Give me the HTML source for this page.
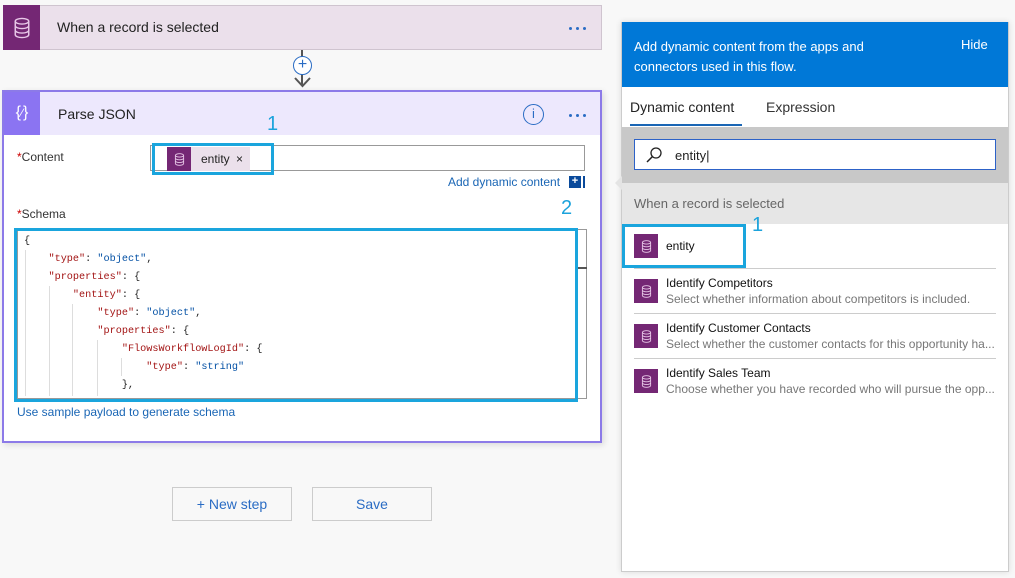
<!DOCTYPE html>
<html><head><style>
*{margin:0;padding:0;box-sizing:border-box}
body{width:1015px;height:578px;background:#f8f8f8;font-family:"Segoe UI","Liberation Sans",sans-serif;position:relative;overflow:hidden;color:#333}
.a{position:absolute}
.t{font-size:13px;white-space:nowrap}
.code{font-family:"Liberation Mono",monospace;font-size:10.2px;white-space:pre;color:#222}
.k{color:#a31515}.s{color:#0451a5}
.dots{display:flex;gap:4px}
.dots i{width:3px;height:3px;border-radius:50%;background:#2a6cc4;display:block}
.ic{background:#742774;display:flex;align-items:center;justify-content:center}
</style></head><body>
<svg width="0" height="0" style="position:absolute"><defs><symbol id="db" viewBox="0 0 16 20"><g fill="none" stroke="#e8c8e8" stroke-width="1.3"><ellipse cx="8" cy="4" rx="6" ry="2.5"/><path d="M2 4v12c0 1.4 2.7 2.5 6 2.5s6-1.1 6-2.5V4M2 8c0 1.4 2.7 2.5 6 2.5s6-1.1 6-2.5M2 12c0 1.4 2.7 2.5 6 2.5s6-1.1 6-2.5"/></g></symbol></defs></svg>

<!-- trigger card -->
<div class="a" style="left:3px;top:5px;width:599px;height:45px;background:#ebe0eb;border:1px solid #cfc4cf"></div>
<div class="a ic" style="left:3px;top:5px;width:37px;height:45px"><svg width="18" height="26"><use href="#db"/></svg></div>
<div class="a t" style="left:57px;top:19px;font-size:14px;color:#222">When a record is selected</div>
<div class="a dots" style="left:569px;top:27px"><i></i><i></i><i></i></div>

<!-- connector -->
<div class="a" style="left:301px;top:50px;width:2px;height:36px;background:#555"></div>
<div class="a" style="left:293px;top:56px;width:19px;height:19px;border-radius:50%;background:#fff;border:1px solid #2a6cc4;color:#2a6cc4;font-size:16px;line-height:16px;text-align:center">+</div>
<svg class="a" style="left:293px;top:76px" width="19" height="13"><path d="M2 2l7.5 8 7.5-8" fill="none" stroke="#555" stroke-width="2"/></svg>

<!-- Parse JSON card -->
<div class="a" style="left:2px;top:90px;width:600px;height:353px;background:#fff;border:2px solid #8c7ae8;box-shadow:2px 2px 6px rgba(0,0,0,.12)"></div>
<div class="a" style="left:4px;top:92px;width:596px;height:43px;background:#ede8fd"></div>
<div class="a" style="left:4px;top:92px;width:36px;height:43px;background:#8b74f2;color:#fff;font-size:16px;text-align:center;line-height:42px">{<span style="font-size:12px">⁄</span>}</div>
<div class="a t" style="left:58px;top:106px;font-size:14px;color:#222">Parse JSON</div>
<div class="a" style="left:523px;top:104px;width:21px;height:21px;border-radius:50%;border:1.5px solid #2a6cc4;color:#2a6cc4;font-size:13px;text-align:center;line-height:18px">i</div>
<div class="a dots" style="left:569px;top:114px"><i></i><i></i><i></i></div>
<div class="a" style="left:267px;top:113px;font-size:20px;color:#1ca3dc">1</div>

<div class="a t" style="left:17px;top:150px;font-size:12px"><span style="color:#c00">*</span>Content</div>
<div class="a" style="left:150px;top:145px;width:435px;height:26px;border:1px solid #999;background:#fff"></div>
<div class="a" style="left:167px;top:147px;width:83px;height:24px;background:#ebe0eb"></div>
<div class="a ic" style="left:167px;top:147px;width:24px;height:24px"><svg width="11" height="15"><use href="#db"/></svg></div>
<div class="a t" style="left:201px;top:152px;font-size:12px;color:#222">entity <span style="margin-left:3px">×</span></div>
<div class="a" style="left:152px;top:143px;width:122px;height:32px;border:3px solid #1aa5dd"></div>
<div class="a t" style="left:448px;top:175px;font-size:12px;color:#1a66b5">Add dynamic content</div>
<div class="a" style="left:569px;top:176px;width:12px;height:12px;background:#0a4a9b;color:#fff;font-size:11px;line-height:11px;text-align:center;font-weight:bold">+</div>
<div class="a" style="left:583px;top:176px;width:2px;height:12px;background:#0a4a9b"></div>

<div class="a t" style="left:17px;top:207px;font-size:12px"><span style="color:#c00">*</span>Schema</div>
<div class="a" style="left:561px;top:197px;font-size:20px;color:#1ca3dc">2</div>
<div class="a" style="left:17px;top:229px;width:570px;height:170px;border:1px solid #999;background:#fff"></div>
<div class="a" style="left:577px;top:267px;width:10px;height:2px;background:#555"></div>
<div class="a" style="left:25px;top:250px;width:1px;height:146px;background:#ddd"></div>
<div class="a" style="left:49px;top:286px;width:1px;height:110px;background:#ddd"></div>
<div class="a" style="left:72px;top:304px;width:1px;height:92px;background:#ddd"></div>
<div class="a" style="left:97px;top:340px;width:1px;height:56px;background:#ddd"></div>
<div class="a" style="left:121px;top:358px;width:1px;height:18px;background:#ddd"></div>
<div class="a code" style="left:24px;top:233px;line-height:18px">{
    <span class="k">"type"</span>: <span class="s">"object"</span>,
    <span class="k">"properties"</span>: {
        <span class="k">"entity"</span>: {
            <span class="k">"type"</span>: <span class="s">"object"</span>,
            <span class="k">"properties"</span>: {
                <span class="k">"FlowsWorkflowLogId"</span>: {
                    <span class="k">"type"</span>: <span class="s">"string"</span>
                },</div>
<div class="a" style="left:14px;top:228px;width:564px;height:174px;border:3px solid #1aa5dd"></div>
<div class="a t" style="left:17px;top:405px;font-size:12px;color:#1a66b5">Use sample payload to generate schema</div>

<!-- buttons -->
<div class="a t" style="left:172px;top:487px;width:120px;height:34px;border:1px solid #ccc;text-align:center;line-height:32px;color:#2a6cc4;font-size:14px">+ New step</div>
<div class="a t" style="left:312px;top:487px;width:120px;height:34px;border:1px solid #ccc;text-align:center;line-height:32px;color:#2a6cc4;font-size:14px">Save</div>

<!-- right panel -->
<div class="a" style="left:621px;top:22px;width:388px;height:550px;background:#fff;border:1px solid #ccc;box-shadow:0 0 6px rgba(0,0,0,.12)"></div>
<div class="a" style="left:615px;top:176px;width:0;height:0;border-top:7px solid transparent;border-bottom:7px solid transparent;border-right:7px solid #e4e4e4"></div>
<div class="a" style="left:622px;top:22px;width:386px;height:65px;background:#0078d7"></div>
<div class="a t" style="left:634px;top:37px;color:#fff;line-height:20px">Add dynamic content from the apps and<br>connectors used in this flow.</div>
<div class="a t" style="left:961px;top:37px;color:#fff">Hide</div>
<div class="a t" style="left:630px;top:99px;color:#222;font-size:14px">Dynamic content</div>
<div class="a" style="left:630px;top:124px;width:112px;height:2px;background:#1a66b5"></div>
<div class="a t" style="left:766px;top:99px;color:#333;font-size:14px">Expression</div>
<div class="a" style="left:622px;top:127px;width:386px;height:56px;background:#c8c8c8"></div>
<div class="a" style="left:634px;top:139px;width:362px;height:31px;background:#fff;border:1px solid #2d62c8"></div>
<svg class="a" style="left:645px;top:146px" width="18" height="18"><circle cx="11" cy="7" r="5" fill="none" stroke="#222" stroke-width="1.3"/><path d="M7.5 10.5L2 16" stroke="#222" stroke-width="1.5"/></svg>
<div class="a t" style="left:675px;top:148px;color:#222">entity|</div>
<div class="a" style="left:622px;top:183px;width:386px;height:41px;background:#e6e6e6"></div>
<div class="a t" style="left:634px;top:196px;color:#666">When a record is selected</div>

<div class="a ic" style="left:634px;top:234px;width:24px;height:24px"><svg width="11" height="15"><use href="#db"/></svg></div>
<div class="a t" style="left:666px;top:239px;font-size:12px;color:#111">entity</div>
<div class="a" style="left:622px;top:224px;width:124px;height:44px;border:3px solid #1aa5dd"></div>
<div class="a" style="left:752px;top:214px;font-size:20px;color:#1ca3dc">1</div>

<div class="a" style="left:634px;top:268px;width:362px;height:1px;background:#ccc"></div>
<div class="a ic" style="left:634px;top:279px;width:24px;height:24px"><svg width="11" height="15"><use href="#db"/></svg></div>
<div class="a t" style="left:666px;top:276px;font-size:12px;color:#111">Identify Competitors</div>
<div class="a t" style="left:666px;top:292px;font-size:12px;color:#777">Select whether information about competitors is included.</div>
<div class="a" style="left:634px;top:313px;width:362px;height:1px;background:#ccc"></div>
<div class="a ic" style="left:634px;top:324px;width:24px;height:24px"><svg width="11" height="15"><use href="#db"/></svg></div>
<div class="a t" style="left:666px;top:321px;font-size:12px;color:#111">Identify Customer Contacts</div>
<div class="a t" style="left:666px;top:337px;font-size:12px;color:#777">Select whether the customer contacts for this opportunity ha...</div>
<div class="a" style="left:634px;top:358px;width:362px;height:1px;background:#ccc"></div>
<div class="a ic" style="left:634px;top:369px;width:24px;height:24px"><svg width="11" height="15"><use href="#db"/></svg></div>
<div class="a t" style="left:666px;top:366px;font-size:12px;color:#111">Identify Sales Team</div>
<div class="a t" style="left:666px;top:382px;font-size:12px;color:#777">Choose whether you have recorded who will pursue the opp...</div>
</body></html>
